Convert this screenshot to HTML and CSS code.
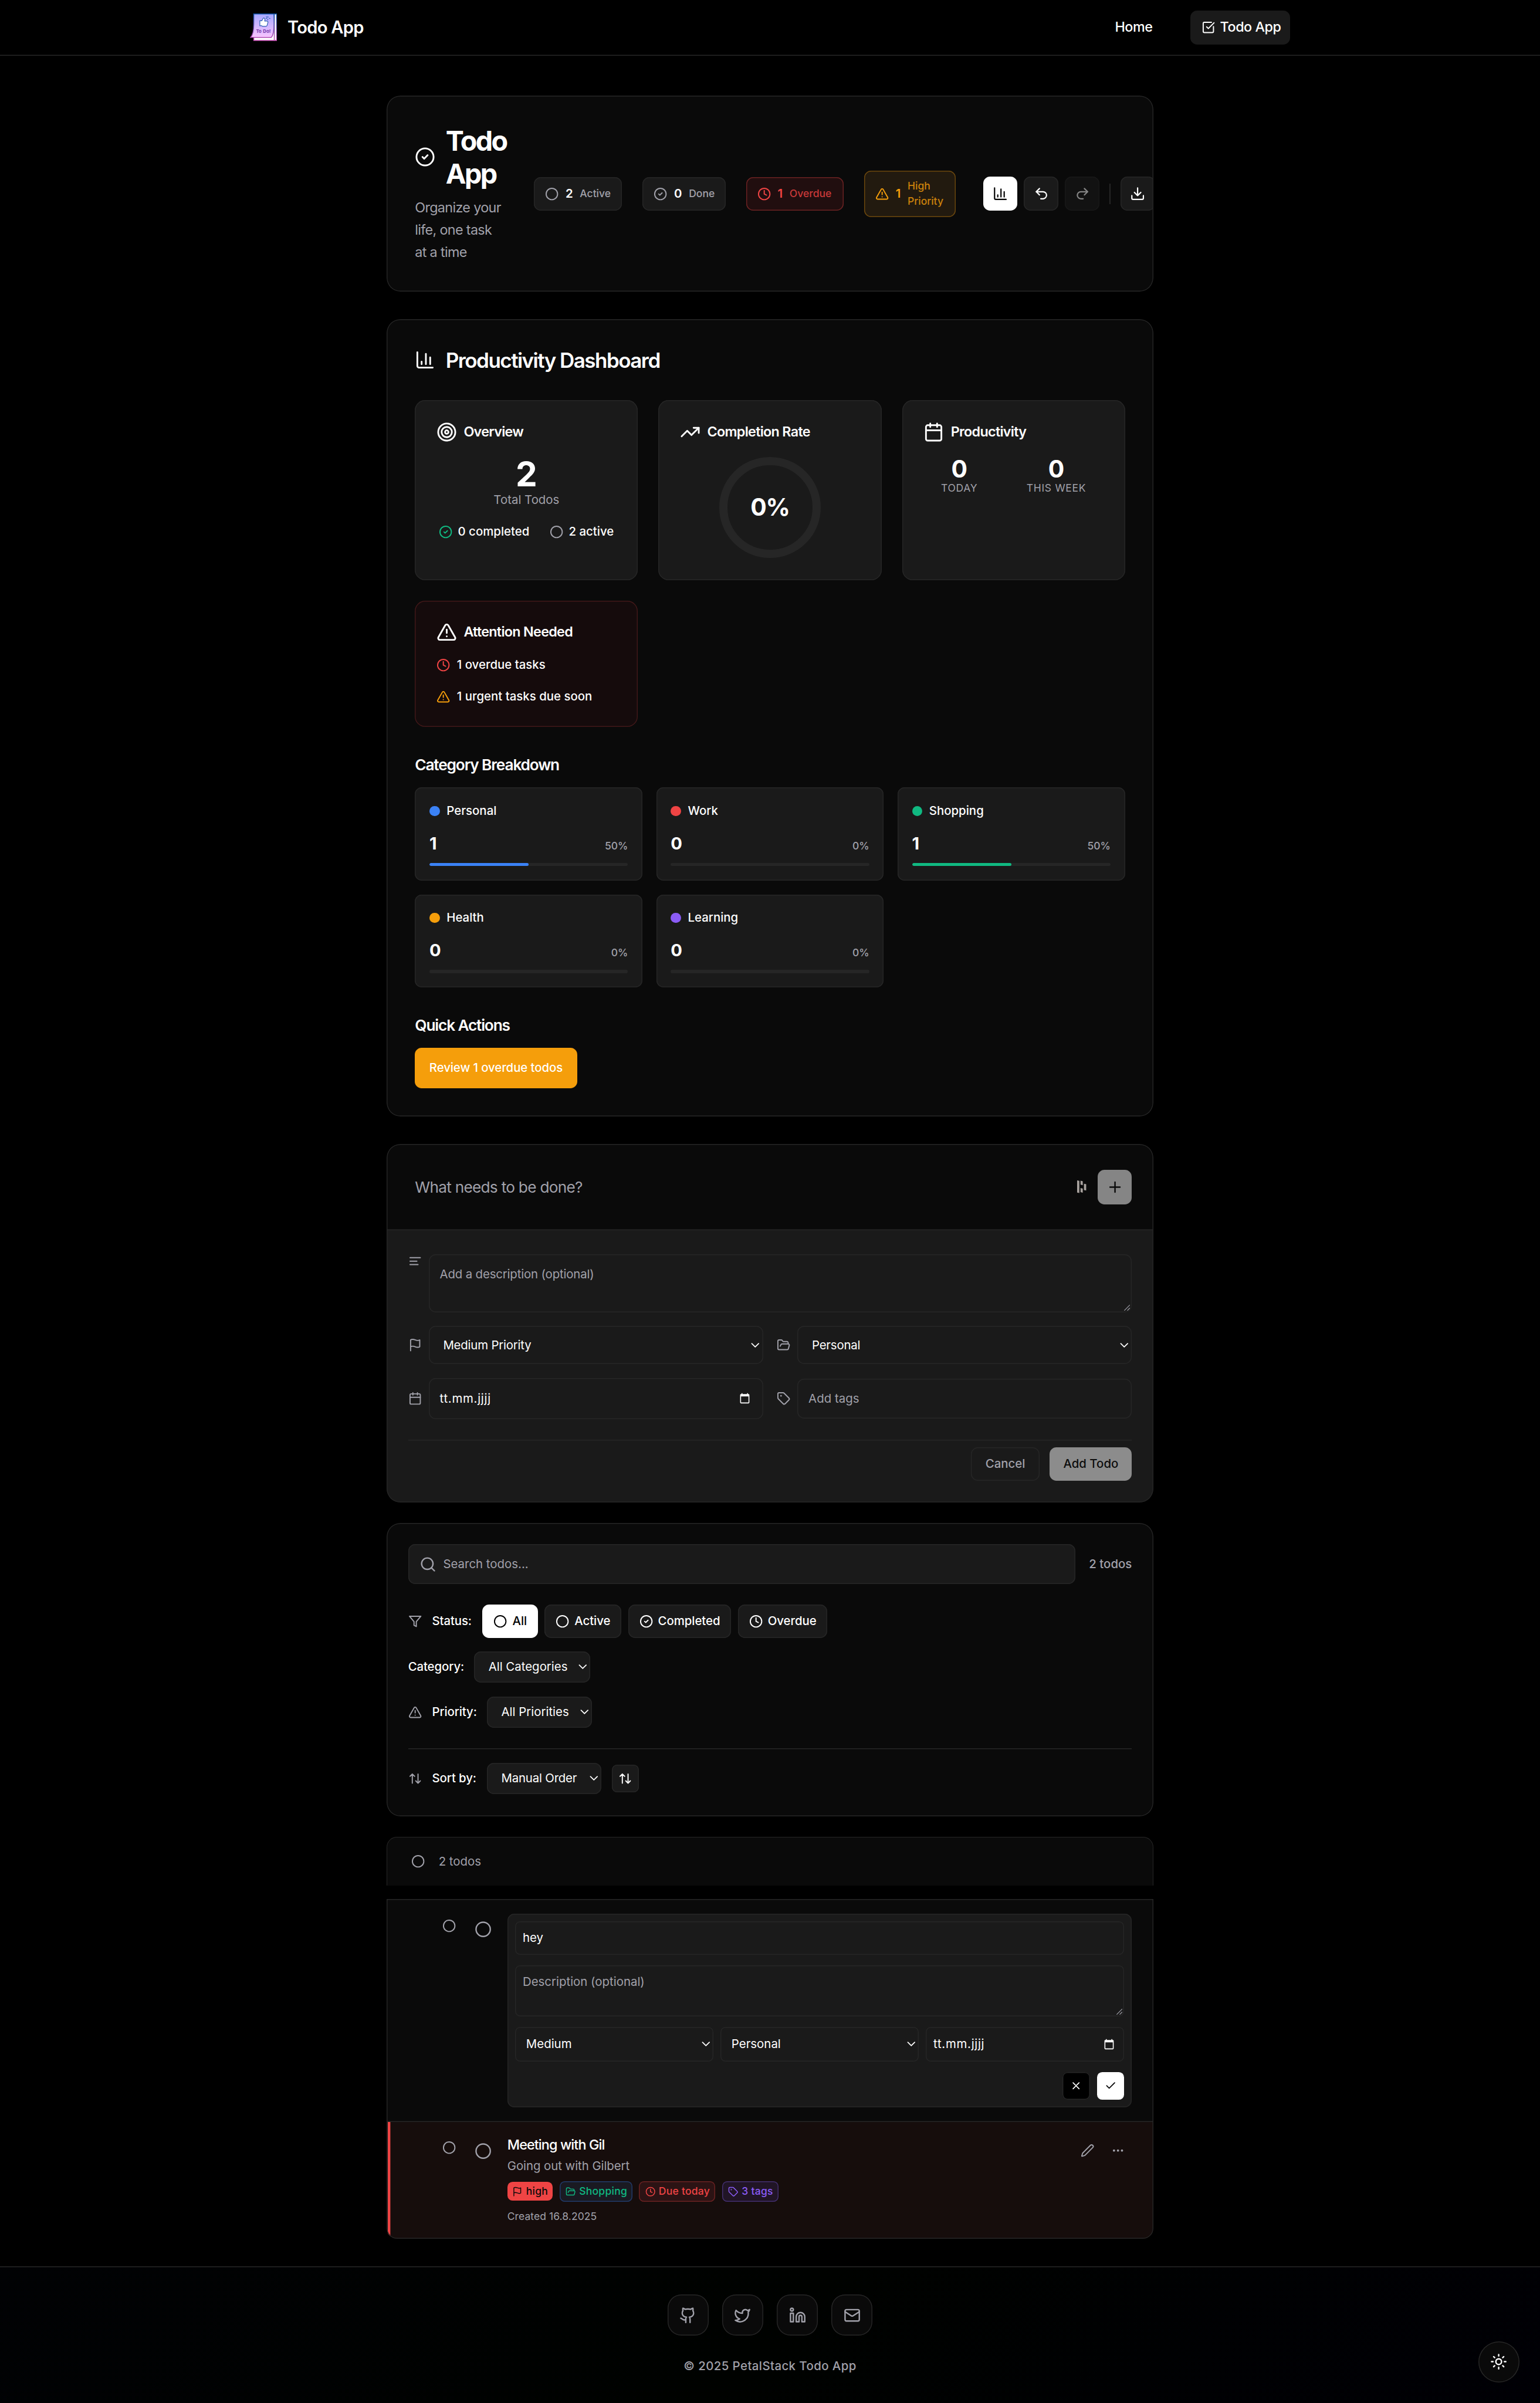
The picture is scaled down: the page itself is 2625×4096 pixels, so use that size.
FILE: index.html
```html
<!DOCTYPE html>
<html lang="en">
<head>
<meta charset="utf-8">
<title>Todo App</title>
<link rel="stylesheet" href="styles.css">
</head>
<body>
<svg class="sprite" width="0" height="0" aria-hidden="true">
  <symbol id="circle" viewBox="0 0 24 24"><circle cx="12" cy="12" r="10"/></symbol>
  <symbol id="circle-check" viewBox="0 0 24 24"><circle cx="12" cy="12" r="10"/><path d="m9 12 2 2 4-4"/></symbol>
  <symbol id="clock" viewBox="0 0 24 24"><circle cx="12" cy="12" r="10"/><path d="M12 6v6l4 2"/></symbol>
  <symbol id="alert" viewBox="0 0 24 24"><path d="m21.73 18-8-14a2 2 0 0 0-3.48 0l-8 14A2 2 0 0 0 4 21h16a2 2 0 0 0 1.73-3"/><path d="M12 9v4M12 17h.01"/></symbol>
  <symbol id="chart" viewBox="0 0 24 24"><path d="M3 3v16a2 2 0 0 0 2 2h16M18 17V9M13 17V5M8 17v-3"/></symbol>
  <symbol id="undo" viewBox="0 0 24 24"><path d="M9 14 4 9l5-5"/><path d="M4 9h10.5a5.5 5.5 0 0 1 0 11H11"/></symbol>
  <symbol id="redo" viewBox="0 0 24 24"><path d="m15 14 5-5-5-5"/><path d="M20 9H9.5a5.5 5.5 0 0 0 0 11H13"/></symbol>
  <symbol id="download" viewBox="0 0 24 24"><path d="M12 15V3M21 15v4a2 2 0 0 1-2 2H5a2 2 0 0 1-2-2v-4M7 10l5 5 5-5"/></symbol>
  <symbol id="target" viewBox="0 0 24 24"><circle cx="12" cy="12" r="10"/><circle cx="12" cy="12" r="6"/><circle cx="12" cy="12" r="2"/></symbol>
  <symbol id="trend" viewBox="0 0 24 24"><path d="M16 7h6v6"/><path d="m22 7-8.500 8.500-5-5L2 17"/></symbol>
  <symbol id="calendar" viewBox="0 0 24 24"><path d="M8 2v4M16 2v4M3 10h18"/><rect x="3" y="4" width="18" height="18" rx="2"/></symbol>
  <symbol id="check-square" viewBox="0 0 24 24"><path d="M21 10.500V19a2 2 0 0 1-2 2H5a2 2 0 0 1-2-2V5a2 2 0 0 1 2-2h12.500"/><path d="m9 11 3 3L22 4"/></symbol>
  <symbol id="plus" viewBox="0 0 24 24"><path d="M5 12h14M12 5v14"/></symbol>
  <symbol id="align-left" viewBox="0 0 24 24"><path d="M21 6H3M15 12H3M17 18H3"/></symbol>
  <symbol id="flag" viewBox="0 0 24 24"><path d="M4 15s1-1 4-1 5 2 8 2 4-1 4-1V3s-1 1-4 1-5-2-8-2-4 1-4 1zM4 22v-7"/></symbol>
  <symbol id="folder" viewBox="0 0 24 24"><path d="m6 14 1.500-2.900A2 2 0 0 1 9.240 10H20a2 2 0 0 1 1.940 2.500l-1.540 6a2 2 0 0 1-1.950 1.500H4a2 2 0 0 1-2-2V5a2 2 0 0 1 2-2h3.900a2 2 0 0 1 1.690.900l.810 1.200a2 2 0 0 0 1.670.900H18a2 2 0 0 1 2 2v2"/></symbol>
  <symbol id="tag" viewBox="0 0 24 24"><path d="M12.586 2.586A2 2 0 0 0 11.172 2H4a2 2 0 0 0-2 2v7.172a2 2 0 0 0 .586 1.414l8.704 8.704a2.426 2.426 0 0 0 3.420 0l6.580-6.580a2.426 2.426 0 0 0 0-3.420z"/><circle cx="7.500" cy="7.500" r=".5" fill="currentColor"/></symbol>
  <symbol id="search" viewBox="0 0 24 24"><circle cx="11" cy="11" r="8"/><path d="m21 21-4.300-4.300"/></symbol>
  <symbol id="filter" viewBox="0 0 24 24"><path d="M22 3H2l8 9.460V19l4 2v-8.540z"/></symbol>
  <symbol id="sort" viewBox="0 0 24 24"><path d="m21 16-4 4-4-4M17 20V4M3 8l4-4 4 4M7 4v16"/></symbol>
  <symbol id="x" viewBox="0 0 24 24"><path d="M18 6 6 18M6 6l12 12"/></symbol>
  <symbol id="check" viewBox="0 0 24 24"><path d="M20 6 9 17l-5-5"/></symbol>
  <symbol id="pencil" viewBox="0 0 24 24"><path d="M21.174 6.812a1 1 0 0 0-3.986-3.987L3.842 16.174a2 2 0 0 0-.500.830l-1.321 4.352a.5.5 0 0 0 .623.622l4.353-1.320a2 2 0 0 0 .830-.497z"/></symbol>
  <symbol id="more" viewBox="0 0 24 24"><circle cx="12" cy="12" r="1"/><circle cx="19" cy="12" r="1"/><circle cx="5" cy="12" r="1"/></symbol>
  <symbol id="chevron" viewBox="0 0 10 6"><path d="M1 .8 5 4.800 9 .8" stroke-width="1.200"/></symbol>
  <symbol id="picker" viewBox="0 0 24 24"><path fill="currentColor" stroke="none" d="M20 3h-1V1h-2v2H7V1H5v2H4c-1.100 0-2 .9-2 2v16c0 1.100.9 2 2 2h16c1.100 0 2-.9 2-2V5c0-1.100-.9-2-2-2zm0 18H4V8h16v13z"/></symbol>
  <symbol id="grip" viewBox="0 0 8 8"><path d="M0.500 7.500 7.500 .5M4.500 7.500l3-3" stroke-width=".9"/></symbol>
  <symbol id="github" viewBox="0 0 24 24"><path d="M15 22v-4a4.800 4.800 0 0 0-1-3.500c3 0 6-2 6-5.500.080-1.250-.270-2.480-1-3.500.280-1.150.280-2.350 0-3.500 0 0-1 0-3 1.500-2.640-.5-5.360-.5-8 0C6 2 5 2 5 2c-.3 1.150-.3 2.350 0 3.500A5.403 5.403 0 0 0 4 9c0 3.500 3 5.500 6 5.500-.390.490-.680 1.050-.850 1.650-.170.600-.220 1.230-.150 1.850v4"/><path d="M9 18c-4.510 2-5-2-7-2"/></symbol>
  <symbol id="twitter" viewBox="0 0 24 24"><path d="M22 4s-.7 2.100-2 3.400c1.600 10-9.400 17.300-18 11.600 2.200.1 4.400-.6 6-2C3 15.500.5 9.600 3 5c2.200 2.600 5.600 4.100 9 4-.9-4.200 4-6.600 7-3.800 1.100 0 3-1.200 3-1.200z"/></symbol>
  <symbol id="linkedin" viewBox="0 0 24 24"><path d="M16 8a6 6 0 0 1 6 6v7h-4v-7a2 2 0 0 0-4 0v7h-4v-7a6 6 0 0 1 6-6z"/><rect x="2" y="9" width="4" height="12"/><circle cx="4" cy="4" r="2"/></symbol>
  <symbol id="mail" viewBox="0 0 24 24"><rect x="2" y="4" width="20" height="16" rx="2"/><path d="m22 7-8.970 5.700a1.940 1.940 0 0 1-2.060 0L2 7"/></symbol>
  <symbol id="sun" viewBox="0 0 24 24"><circle cx="12" cy="12" r="4"/><path d="M12 2v2M12 20v2M4.930 4.930l1.410 1.410M17.660 17.660l1.410 1.410M2 12h2M20 12h2M6.340 17.660l-1.410 1.410M19.070 4.930l-1.410 1.410"/></symbol>
</svg>

<header class="topbar">
  <div class="topbar-inner">
    <a class="brand">
      <svg class="logo" viewBox="0 0 32 32">
        <defs>
          <linearGradient id="sheet" x1="0" y1="0" x2="0" y2="1"><stop offset="0" stop-color="#a6a8ff"/><stop offset="1" stop-color="#f9c4ff"/></linearGradient>
          <linearGradient id="edge" gradientUnits="userSpaceOnUse" x1="0" y1="0" x2="0" y2="32"><stop offset="0" stop-color="#0a50a5"/><stop offset="1" stop-color="#c84bb4"/></linearGradient>
        </defs>
        <path d="M4.500.5h26.700v31H4.500z" fill="#fff" stroke="url(#edge)"/>
        <path d="M28.500.5v31" stroke="url(#edge)"/>
        <path d="M4.500.5h23.700v12c0 8-.6 12.500-3.200 15.500H.8c2.700-3 3.700-7.500 3.700-15.500z" fill="url(#sheet)" stroke="url(#edge)"/>
        <path d="M11.600 8.500h2.300l1.800-3.200c1.300-.2 1.900.6 1.800 1.800l-.2 1.700h2.700c1.100.2 1.300 1.200.9 2.100l-.8 3c-.3.800-.8 1.100-1.700 1.100h-3.700l-1-.7h-2.100z" fill="#fff" stroke="#2a5cb4" stroke-width=".8"/>
        <path d="M21 3.500v1.200M19.600 5.400l-.6.500M22.800 5.600l.7.400M20.900 6.700v.6M19.200 3.800l.4.300" stroke="#2a5cb4" stroke-width=".9"/>
        <text x="15.800" y="22.300" text-anchor="middle" class="logo-text">To Do!</text>
      </svg>
      <span>Todo App</span>
    </a>
    <nav class="nav">
      <a class="nav-link">Home</a>
      <a class="nav-link active"><svg class="i16"><use href="#check-square"/></svg>Todo App</a>
    </nav>
  </div>
</header>

<main class="main">
  <section class="card hero">
    <div class="hero-copy">
      <div class="hero-title"><svg class="i24"><use href="#circle-check"/></svg><h1>Todo App</h1></div>
      <p>Organize your life, one task at a time</p>
    </div>
    <div class="chips">
      <div class="chip chip-active"><svg class="i16"><use href="#circle"/></svg><b>2</b><span>Active</span></div>
      <div class="chip chip-done"><svg class="i16"><use href="#circle-check"/></svg><b>0</b><span>Done</span></div>
      <div class="chip chip-overdue"><svg class="i16"><use href="#clock"/></svg><b>1</b><span>Overdue</span></div>
      <div class="chip chip-high"><svg class="i16"><use href="#alert"/></svg><b>1</b><span>High Priority</span></div>
    </div>
    <div class="tools">
      <button class="tool on"><svg class="i18"><use href="#chart"/></svg></button>
      <button class="tool"><svg class="i18"><use href="#undo"/></svg></button>
      <button class="tool off"><svg class="i18"><use href="#redo"/></svg></button>
      <i class="tool-sep"></i>
      <button class="tool"><svg class="i18"><use href="#download"/></svg></button>
    </div>
  </section>

  <section class="card dash">
    <h2><svg class="i24"><use href="#chart"/></svg>Productivity Dashboard</h2>
    <div class="stats">
      <article class="stat">
        <h3><svg class="i24"><use href="#target"/></svg>Overview</h3>
        <div class="total">2</div>
        <div class="total-label">Total Todos</div>
        <div class="split">
          <span><svg class="i16 green"><use href="#circle-check"/></svg>0 completed</span>
          <span><svg class="i16 gray"><use href="#circle"/></svg>2 active</span>
        </div>
      </article>
      <article class="stat">
        <h3><svg class="i24"><use href="#trend"/></svg>Completion Rate</h3>
        <div class="ring">0%</div>
      </article>
      <article class="stat">
        <h3><svg class="i24"><use href="#calendar"/></svg>Productivity</h3>
        <div class="periods">
          <div><b>0</b><span>Today</span></div>
          <div><b>0</b><span>This week</span></div>
        </div>
      </article>
      <article class="stat attention">
        <h3><svg class="i24"><use href="#alert"/></svg>Attention Needed</h3>
        <p><svg class="i16 red"><use href="#clock"/></svg>1 overdue tasks</p>
        <p><svg class="i16 amber"><use href="#alert"/></svg>1 urgent tasks due soon</p>
      </article>
    </div>
    <h4>Category Breakdown</h4>
    <div class="cats">
      <article class="cat c-personal"><div class="cat-name"><i></i>Personal</div><div class="cat-nums"><b>1</b><span>50%</span></div><div class="bar"><i style="width:50%"></i></div></article>
      <article class="cat c-work"><div class="cat-name"><i></i>Work</div><div class="cat-nums"><b>0</b><span>0%</span></div><div class="bar"><i style="width:0%"></i></div></article>
      <article class="cat c-shopping"><div class="cat-name"><i></i>Shopping</div><div class="cat-nums"><b>1</b><span>50%</span></div><div class="bar"><i style="width:50%"></i></div></article>
      <article class="cat c-health"><div class="cat-name"><i></i>Health</div><div class="cat-nums"><b>0</b><span>0%</span></div><div class="bar"><i style="width:0%"></i></div></article>
      <article class="cat c-learning"><div class="cat-name"><i></i>Learning</div><div class="cat-nums"><b>0</b><span>0%</span></div><div class="bar"><i style="width:0%"></i></div></article>
    </div>
    <h4>Quick Actions</h4>
    <button class="review">Review 1 overdue todos</button>
  </section>

  <section class="card composer">
    <div class="composer-top">
      <span class="composer-input">What needs to be done?</span>
      <svg class="ext" viewBox="0 0 11 15"><path d="M0 0l2.600.5v14.300L0 14.300zM4 .4l2.600.6v4.600L4 5zM4 9l2.600.6v4.800L4 13.800zM8 3.900l2.600.6v7.400L8 11.400z"/></svg>
      <button class="add"><svg class="i20"><use href="#plus"/></svg></button>
    </div>
    <div class="composer-body">
      <div class="field field-desc">
        <svg class="i16"><use href="#align-left"/></svg>
        <div class="box textarea ph">Add a description (optional)<svg class="grip"><use href="#grip"/></svg></div>
      </div>
      <div class="pair">
        <div class="field"><svg class="i16"><use href="#flag"/></svg><div class="box select">Medium Priority<svg class="chev"><use href="#chevron"/></svg></div></div>
        <div class="field"><svg class="i16"><use href="#folder"/></svg><div class="box select">Personal<svg class="chev"><use href="#chevron"/></svg></div></div>
      </div>
      <div class="pair">
        <div class="field"><svg class="i16"><use href="#calendar"/></svg><div class="box date"><span class="dt">tt.mm.jjjj</span><svg class="pick"><use href="#picker"/></svg></div></div>
        <div class="field"><svg class="i16"><use href="#tag"/></svg><div class="box tags ph">Add tags</div></div>
      </div>
      <div class="composer-foot">
        <button class="btn-cancel">Cancel</button>
        <button class="btn-submit">Add Todo</button>
      </div>
    </div>
  </section>

  <section class="card filters">
    <div class="search-row">
      <div class="search"><svg class="i20"><use href="#search"/></svg>Search todos...</div>
      <span class="count">2 todos</span>
    </div>
    <div class="frow status">
      <svg class="i16 gray"><use href="#filter"/></svg><label>Status:</label>
      <div class="pills">
        <button class="pill on"><svg class="i16"><use href="#circle"/></svg>All</button>
        <button class="pill"><svg class="i16"><use href="#circle"/></svg>Active</button>
        <button class="pill"><svg class="i16"><use href="#circle-check"/></svg>Completed</button>
        <button class="pill"><svg class="i16"><use href="#clock"/></svg>Overdue</button>
      </div>
    </div>
    <div class="frow"><label class="l-cat">Category:</label><div class="drop d-cat">All Categories<svg class="chev"><use href="#chevron"/></svg></div></div>
    <div class="frow"><svg class="i16 gray"><use href="#alert"/></svg><label class="l-pri">Priority:</label><div class="drop d-pri">All Priorities<svg class="chev"><use href="#chevron"/></svg></div></div>
    <div class="frow sorting"><svg class="i16 gray"><use href="#sort"/></svg><label class="l-pri">Sort by:</label><div class="drop d-sort">Manual Order<svg class="chev"><use href="#chevron"/></svg></div><button class="sort-dir"><svg class="i16"><use href="#sort"/></svg></button></div>
  </section>

  <section class="list-head"><svg class="i16"><use href="#circle"/></svg>2 todos</section>
  <section class="card list">
    <article class="item editing">
      <svg class="i16 pickbox"><use href="#circle"/></svg><svg class="i20 tick"><use href="#circle"/></svg>
      <div class="editor">
        <div class="ebox e-title">hey</div>
        <div class="ebox e-desc ph">Description (optional)<svg class="grip"><use href="#grip"/></svg></div>
        <div class="e-row">
          <div class="ebox e-sel">Medium<svg class="chev"><use href="#chevron"/></svg></div>
          <div class="ebox e-sel">Personal<svg class="chev"><use href="#chevron"/></svg></div>
          <div class="ebox e-date"><span class="dt">tt.mm.jjjj</span><svg class="pick"><use href="#picker"/></svg></div>
        </div>
        <div class="e-actions"><button class="e-no"><svg class="i14"><use href="#x"/></svg></button><button class="e-yes"><svg class="i14"><use href="#check"/></svg></button></div>
      </div>
    </article>
    <article class="item overdue">
      <svg class="i16 pickbox"><use href="#circle"/></svg><svg class="i20 tick"><use href="#circle"/></svg>
      <div class="info">
        <h5>Meeting with Gil</h5>
        <p>Going out with Gilbert</p>
        <div class="badges">
          <span class="badge b-high"><svg class="i12"><use href="#flag"/></svg>high</span>
          <span class="badge b-cat"><svg class="i12"><use href="#folder"/></svg>Shopping</span>
          <span class="badge b-due"><svg class="i12"><use href="#clock"/></svg>Due today</span>
          <span class="badge b-tags"><svg class="i12"><use href="#tag"/></svg>3 tags</span>
        </div>
        <small>Created 16.8.2025</small>
      </div>
      <div class="item-actions"><button><svg class="i16"><use href="#pencil"/></svg></button><button><svg class="i16"><use href="#more"/></svg></button></div>
    </article>
  </section>
</main>

<footer class="footer">
  <div class="social">
    <a><svg class="i20"><use href="#github"/></svg></a>
    <a><svg class="i20"><use href="#twitter"/></svg></a>
    <a><svg class="i20"><use href="#linkedin"/></svg></a>
    <a><svg class="i20"><use href="#mail"/></svg></a>
  </div>
  <p>© 2025 PetalStack Todo App</p>
</footer>
<button class="theme"><svg class="i20"><use href="#sun"/></svg></button>
</body>
</html>
```
FILE: styles.css
```css
:root {
  --bg: #000;
  --surface: #0a0a0a;
  --raised: #1a1a1a;
  --line: #262626;
  --text: #fff;
  --muted: #a1a1aa;
  --red: #ef4444;
  --amber: #f59e0b;
  --green: #10b981;
  --ring: inset 0 0 0 1px var(--line);
}
* { box-sizing: border-box; margin: 0; }
html { zoom: 1.458333; }
body {
  background: var(--bg);
  color: var(--text);
  font: 400 14px/1.5 Inter, "Noto Sans", sans-serif;
  overflow: hidden;
}
button { font: inherit; color: inherit; border: 0; background: none; padding: 0; display: flex; align-items: center; justify-content: center; white-space: nowrap; }
svg { flex: none; fill: none; stroke: currentColor; stroke-width: 2; stroke-linecap: round; stroke-linejoin: round; display: block; }
.sprite { position: absolute; }
.i12 { width: 12px; height: 12px; }
.i14 { width: 14px; height: 14px; }
.i16 { width: 16px; height: 16px; }
.i18 { width: 18px; height: 18px; }
.i20 { width: 20px; height: 20px; }
.i24 { width: 24px; height: 24px; }
.gray { color: var(--muted); }
.green { color: var(--green); }
.red { color: var(--red); }
.amber { color: var(--amber); }
.ph { color: var(--muted); }

/* top bar */
.topbar { height: 65px; box-shadow: inset 0 -1px 0 var(--line); }
.topbar-inner { width: 1216px; height: 64px; margin: 0 auto; display: flex; align-items: center; justify-content: space-between; }
.brand { display: flex; align-items: center; gap: 12px; font-size: 20px; font-weight: 600; letter-spacing: -.025em; }
.logo { width: 32px; height: 32px; stroke-width: 1; stroke-linejoin: miter; }
.logo-text { font: 700 5.600px "Noto Sans", sans-serif; letter-spacing: 0; fill: #7c3fae; stroke: none; }
.nav { display: flex; align-items: center; gap: 32px; font-size: 16px; font-weight: 500; letter-spacing: -.02em; }
.nav-link { display: flex; align-items: center; gap: 6px; height: 40px; padding: 0 12px; white-space: nowrap; }
.nav-link.active { width: 117px; padding: 0 0 0 13px; background: var(--raised); border-radius: 8px; }

.main { width: 896px; margin: 47px auto 0; }
.card { position: relative; background: var(--surface); border-radius: 16px; overflow: hidden; }
.card::after { content: ""; position: absolute; inset: 0; border-radius: inherit; box-shadow: var(--ring); pointer-events: none; }

/* hero */
.hero { height: 229px; padding: 33px; display: flex; align-items: center; }
.hero-copy { width: 107px; margin-right: 32px; flex: none; }
.hero-title { display: flex; align-items: center; gap: 12px; margin-bottom: 8px; }
.hero-title h1 { font-size: 32px; line-height: 38.4px; font-weight: 700; letter-spacing: -.055em; }
.hero-copy p { width: 103px; font-size: 16px; line-height: 26px; color: var(--muted); letter-spacing: -.028em; }
.chips { display: flex; align-items: center; gap: 24px; flex: none; }
.chip { height: 39px; display: flex; align-items: center; gap: 8px; padding: 0 13px; box-shadow: var(--ring); border-radius: 8px; background: var(--raised); color: var(--muted); }
.chip b { font-size: 14px; font-weight: 600; color: var(--text); }
.chip span { font-size: 12px; line-height: 18px; font-weight: 500; }
.chip-active { width: 103px; }
.chip-done { width: 97px; }
.chip-overdue { width: 114px; }
.chip-high { width: 107px; height: 54px; }
.chip-overdue { background: #210e0f; box-shadow: inset 0 0 0 1px #6b2222; color: var(--red); }
.chip-overdue span { opacity: .8; }
.chip-high { background: #221a0f; box-shadow: inset 0 0 0 1px #6b470d; color: var(--amber); }
.chip-high span { opacity: .8; }
.chip-overdue b, .chip-high b { color: inherit; }
.tools { display: flex; align-items: center; gap: 8px; margin-left: 32px; flex: none; }
.tool { width: 40px; height: 40px; flex: none; box-shadow: var(--ring); border-radius: 8px; background: var(--raised); }
.tool.on { background: #fff; box-shadow: none; color: #000; }
.tool.off { opacity: .5; }
.tool-sep { width: 1px; height: 24px; margin: 0 4px; background: var(--line); }

/* dashboard */
.dash { height: 932px; margin-top: 32px; padding: 33px; }
.dash h2 { display: flex; align-items: center; gap: 12px; height: 30px; font-size: 24px; font-weight: 600; letter-spacing: -.044em; margin-bottom: 32px; }
.stats { display: grid; grid-template-columns: repeat(3, 1fr); grid-template-rows: 210px 148px; gap: 24px; }
.stat { padding: 25px; box-shadow: var(--ring); border-radius: 12px; background: var(--raised); }
.stat h3 { display: flex; align-items: center; gap: 8px; height: 24px; margin-bottom: 16px; font-size: 16px; font-weight: 600; letter-spacing: -.03em; white-space: nowrap; }
.total { font-size: 40px; line-height: 40px; font-weight: 700; text-align: center; padding-top: 1px; }
.total-label { text-align: center; color: var(--muted); line-height: 21px; }
.split { display: flex; justify-content: center; gap: 24px; margin-top: 16px; font-weight: 500; white-space: nowrap; }
.split span { display: flex; align-items: center; gap: 6px; }
.ring { width: 118px; height: 118px; margin: 17px auto 0; border: 10px solid var(--line); border-radius: 50%; display: flex; align-items: center; justify-content: center; font-size: 28px; font-weight: 700; letter-spacing: -.03em; }
.periods { display: flex; justify-content: space-around; gap: 16px; text-align: center; padding-top: 1px; }
.periods b { display: block; font-size: 28px; line-height: 28px; font-weight: 700; }
.periods span { display: block; font-size: 12px; line-height: 18px; color: var(--muted); text-transform: uppercase; letter-spacing: .04em; }
.attention { background: #150b0c; box-shadow: inset 0 0 0 1px #411819; }
.attention p { display: flex; align-items: center; gap: 8px; height: 21px; margin-bottom: 16px; font-weight: 500; }
.dash h4 { font-size: 18px; line-height: 22.5px; font-weight: 600; letter-spacing: -.044em; margin: 33px 0 15px; }
.cats { display: grid; grid-template-columns: repeat(3, 1fr); grid-auto-rows: 109px; gap: 16px; }
.cat { padding: 17px; box-shadow: var(--ring); border-radius: 8px; background: var(--raised); }
.cat-name { display: flex; align-items: center; gap: 8px; height: 21px; font-weight: 500; }
.cat-name i { width: 12px; height: 12px; border-radius: 50%; background: var(--c); }
.cat-nums { display: flex; justify-content: space-between; align-items: baseline; height: 29.500px; margin: 12.500px 0 8px; }
.cat-nums b { font-size: 20px; font-weight: 700; }
.cat-nums span { font-size: 12px; font-weight: 500; color: var(--muted); }
.bar { height: 4px; border-radius: 2px; background: var(--line); overflow: hidden; }
.bar i { display: block; height: 4px; border-radius: 2px; background: var(--c); }
.c-personal { --c: #3b82f6; }
.c-work { --c: #ef4444; }
.c-shopping { --c: #10b981; }
.c-health { --c: #f59e0b; }
.c-learning { --c: #8b5cf6; }
.review { width: 189.500px; height: 47px; border-radius: 8px; background: var(--amber); font-weight: 500; letter-spacing: -.005em; }

/* composer */
.composer { height: 419px; margin-top: 32px; display: flex; flex-direction: column; }
.composer-top { height: 101px; flex: none; display: flex; align-items: center; padding: 0 25px 0 33px; box-shadow: inset 0 -1px 0 var(--line); }
.composer-input { flex: 1; font-size: 18px; color: var(--muted); letter-spacing: -.028em; }
.ext { width: 11px; height: 15px; margin-right: 13px; fill: #a8a29e; stroke: none; }
.add { width: 40px; height: 40px; border-radius: 8px; background: #858585; color: #0a0a0a; }
.composer-body { flex: 1; padding: 28px 25px 24.500px; background: var(--raised); display: flex; flex-direction: column; gap: 16px; }
.field { flex: 1; display: flex; align-items: center; gap: 8px; color: var(--muted); }
.field-desc { flex: none; align-items: flex-start; }
.box { position: relative; flex: 1; display: flex; align-items: center; padding: 0 13px; box-shadow: var(--ring); border-radius: 8px; color: var(--text); }
.box.ph { color: var(--muted); }
.textarea { height: 68px; align-items: flex-start; padding: 13px; letter-spacing: -.008em; }
.select { height: 44.500px; padding: 1px 4px 0 17px; justify-content: space-between; letter-spacing: -.01em; }
.date { height: 48.500px; justify-content: space-between; padding-right: 15px; }
.tags { height: 46.500px; }
.chev { width: 10px; height: 6px; }
.pick { width: 13px; height: 13px; }
.dt { letter-spacing: .035em; }
.grip { position: absolute; right: 2px; bottom: 2px; width: 7px; height: 7px; }
.pair { display: flex; gap: 16px; }
.composer-foot { display: flex; justify-content: flex-end; gap: 12px; margin-top: 8px; padding-top: 9px; box-shadow: inset 0 1px 0 var(--line); font-weight: 500; }
.btn-cancel { width: 80px; height: 39px; box-shadow: var(--ring); border-radius: 8px; color: var(--muted); }
.btn-submit { width: 96px; height: 39px; border-radius: 8px; background: #8c8c8c; color: #0d0d0d; }

/* filters */
.filters { height: 343px; margin-top: 24px; padding: 25px; }
.search-row { display: flex; align-items: center; justify-content: space-between; margin-bottom: 24px; }
.search { width: 780px; height: 46.500px; display: flex; align-items: center; gap: 8px; padding: 0 13px; box-shadow: var(--ring); border-radius: 8px; background: var(--raised); color: var(--muted); }
.count { color: var(--muted); font-weight: 500; }
.frow { display: flex; align-items: center; gap: 12px; margin-bottom: 16px; }
.frow label { font-weight: 550; white-space: nowrap; letter-spacing: -.005em; }
.status label { width: 47px; }
.l-cat { width: 65px; }
.l-pri { width: 52px; }
.pills { display: flex; gap: 8px; }
.pill { height: 39px; padding: 0 12.700px 0 13px; gap: 6px; box-shadow: var(--ring); border-radius: 8px; background: var(--raised); font-weight: 500; letter-spacing: -.003em; }
.pill.on { background: #fff; box-shadow: none; color: #000; }
.drop { height: 36.500px; display: flex; align-items: center; justify-content: space-between; padding: 0 4px 0 17px; box-shadow: var(--ring); border-radius: 8px; background: var(--raised); white-space: nowrap; }
.d-cat { width: 136px; }
.d-pri { width: 123px; }
.d-sort { width: 134px; letter-spacing: -.01em; }
.sorting { margin: 24px 0 0; padding-top: 17px; box-shadow: inset 0 1px 0 var(--line); }
.sort-dir { width: 32px; height: 32px; box-shadow: var(--ring); border-radius: 6px; background: var(--raised); }

/* list */
.list-head { height: 57px; margin-top: 24px; padding: 0 28px; display: flex; align-items: center; gap: 16px; background: var(--surface); border: 1px solid var(--line); border-bottom: 0; border-radius: 12px 12px 0 0; color: var(--muted); }
.list { height: 397px; margin-top: 16px; border-radius: 0 0 12px 12px; }
.item { display: flex; align-items: flex-start; color: var(--muted); }
.editing { height: 260px; padding: 17px 25px 0 65px; box-shadow: inset 0 -1px 0 var(--line); }
.overdue { height: 137px; margin-left: 1px; padding: 16px 25px 0 64px; box-shadow: inset 3px 0 0 var(--red); background: #160d0c; }
.pickbox { margin-top: 6px; }
.tick { margin: 8px 18px 0 22px; }
.editor { flex: 1; height: 226px; padding: 9px; box-shadow: var(--ring); border-radius: 8px; background: var(--raised); color: var(--text); }
.ebox { position: relative; display: flex; align-items: center; padding: 0 9px; box-shadow: var(--ring); border-radius: 6px; }
.e-title { height: 39px; margin-bottom: 12px; }
.ebox.ph { color: var(--muted); }
.e-desc { height: 60px; align-items: flex-start; padding-top: 9px; margin-bottom: 12px; }
.e-row { display: grid; grid-template-columns: repeat(3, 1fr); gap: 8px; margin-bottom: 12px; }
.e-row .ebox { height: 41px; justify-content: space-between; }
.e-row .e-sel { padding: 0 4px 0 13px; }
.e-row .e-date { padding-right: 11px; }
.e-actions { display: flex; justify-content: flex-end; gap: 8px; }
.e-actions button { width: 32px; height: 32px; border-radius: 6px; }
.e-no { background: #000; box-shadow: var(--ring); }
.e-yes { background: #fff; color: #000; }
.info { flex: 1; }
.info h5 { font-size: 16px; line-height: 22px; font-weight: 500; color: var(--text); letter-spacing: -.038em; }
.info p { line-height: 21px; margin-top: 3.500px; letter-spacing: -.003em; }
.badges { display: flex; align-items: center; gap: 8px; margin-top: 7px; }
.badge { --b: transparent; height: 24px; display: flex; align-items: center; gap: 4px; padding: 0 7px; box-shadow: inset 0 0 0 1px var(--b); border-radius: 6px; font-size: 12px; font-weight: 500; letter-spacing: .015em; white-space: nowrap; }
.b-high { height: 22px; width: 53px; padding: 0 6px; background: var(--red); color: #0a0a0a; }
.b-cat { width: 85px; background: #1a1a22; --b: #213b6b; color: var(--green); }
.b-due { width: 89px; background: #2c1314; --b: #6b2222; color: var(--red); }
.b-tags { width: 66px; background: #211526; --b: #432f70; color: #8b5cf6; }
.info small { display: block; font-size: 12px; line-height: 18px; margin-top: 8.500px; letter-spacing: .005em; }
.item-actions { display: flex; gap: 4px; margin-top: 2px; }
.item-actions button { width: 32px; height: 32px; }

/* footer */
.footer { height: 160px; margin-top: 32px; padding-top: 1px; box-shadow: inset 0 1px 0 var(--line); background: linear-gradient(135deg, #010204, #000200 50%, #000005); display: flex; flex-direction: column; align-items: center; color: var(--muted); }
.social { display: flex; gap: 16px; margin-top: 32px; }
.social a { width: 48px; height: 48px; display: flex; align-items: center; justify-content: center; box-shadow: var(--ring); border-radius: 16px; background: var(--surface); }
.footer p { margin-top: 25px; font-weight: 500; letter-spacing: .02em; }
.theme { position: fixed; right: 24px; bottom: 24px; width: 48px; height: 48px; box-shadow: var(--ring); border-radius: 50%; background: var(--surface); }
```
